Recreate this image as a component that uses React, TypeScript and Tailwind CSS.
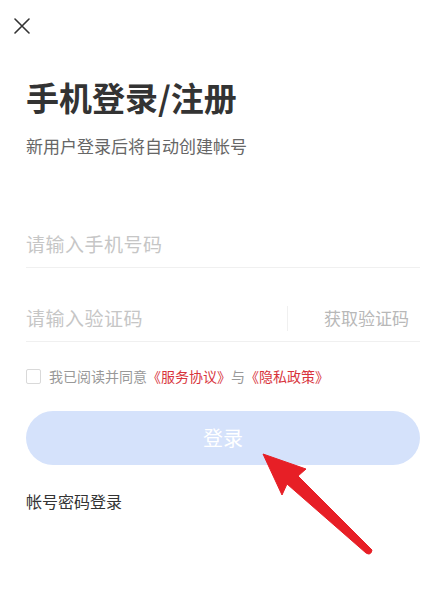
import React, { useState } from "react";

const App: React.FC = () => {
	const [phone, setPhone] = useState("");
	const [code, setCode] = useState("");
	const [agreed, setAgreed] = useState(false);

	return (
		<div
			className="relative h-[600px] w-[446px] overflow-hidden bg-white text-[#333]"
			style={{ fontFamily: '"Noto Sans CJK SC", "Noto Sans", sans-serif' }}>
			{/* Top bar */}
			<div className="flex h-[52px] items-center pl-[14px]">
				<button type="button" className="flex h-[16px] w-[16px] items-center justify-center">
					<svg width="16" height="16" viewBox="0 0 16 16" fill="none">
						<path d="M1 1L15 15M15 1L1 15" stroke="#333" strokeWidth="1.6" strokeLinecap="round" />
					</svg>
				</button>
			</div>

			<div className="px-[26px]">
				{/* Heading */}
				<h1 className="mt-[25px] text-[33px] font-bold leading-[40px] text-[#333]">
					手机登录/注册
				</h1>
				<p className="mt-[17px] text-[17px] leading-[24px] text-[#666]">
					新用户登录后将自动创建帐号
				</p>

				{/* Phone */}
				<div className="mt-[63px] flex h-[47px] items-center border-b border-[#f0f0f0]">
					<input
						value={phone}
						onChange={(e) => setPhone(e.target.value)}
						placeholder="请输入手机号码"
						className="w-full bg-transparent text-[19px] tracking-[0.5px] outline-none placeholder:text-[#c6c6c6]"
					/>
				</div>

				{/* Code */}
				<div className="mt-[27px] flex h-[47px] items-center border-b border-[#f0f0f0]">
					<input
						value={code}
						onChange={(e) => setCode(e.target.value)}
						placeholder="请输入验证码"
						className="min-w-0 flex-1 bg-transparent text-[19px] tracking-[0.5px] outline-none placeholder:text-[#c6c6c6]"
					/>
					<div className="h-[25px] w-px bg-[#f0f0f0]" />
					<button type="button" className="pl-[36px] pr-[11px] text-[17px] text-[#b8b8b8]">
						获取验证码
					</button>
				</div>

				{/* Agreement */}
				<div className="mt-[24px] flex h-[20px] items-center text-[14px]">
					<button
						type="button"
						onClick={() => setAgreed(!agreed)}
						className="h-[15px] w-[15px] rounded-[2px] border border-[#d9d9d9]"
					/>
					<span className="ml-[8px] text-[#999]">我已阅读并同意</span>
					<span className="text-[#d8343c]">《服务协议》</span>
					<span className="text-[#999]">与</span>
					<span className="text-[#d8343c]">《隐私政策》</span>
				</div>

				{/* Login */}
				<button
					type="button"
					className="mt-[25px] flex h-[54px] w-full items-center justify-center rounded-full bg-[#d5e2fb] text-[20px] text-white">
					登录
				</button>

				<div className="mt-[24px] text-[16px] leading-[24px] text-[#333]">帐号密码登录</div>
			</div>

			{/* Red annotation arrow */}
			<svg
				className="pointer-events-none absolute left-0 top-0"
				width="446"
				height="600"
				viewBox="0 0 446 600">
				<path
					d="M263 454 L306 469 L298 476 L372 550 Q371 556 366 553 L287 484 L282 495 Z"
					fill="#e71f26"
					stroke="#e71f26"
					strokeWidth="1"
					strokeLinejoin="round"
				/>
			</svg>
		</div>
	);
};

export default App;
